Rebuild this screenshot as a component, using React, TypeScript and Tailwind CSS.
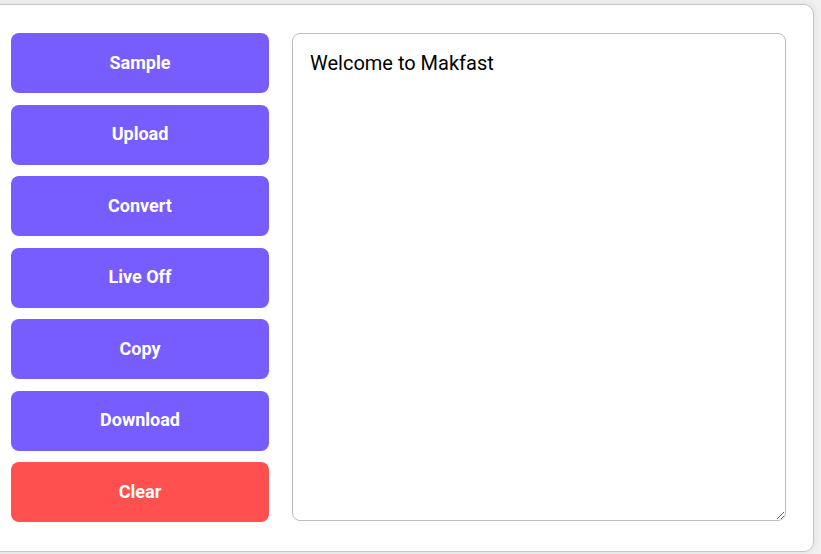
export default function App() {
  const buttons = ['Sample', 'Upload', 'Convert', 'Live Off', 'Copy', 'Download'];

  return (
    <div className="h-[554px] overflow-hidden bg-[#f0f0f0] pt-1 font-['Roboto',sans-serif]">
      <div className="-ml-[10px] flex h-[548px] w-[824px] gap-[23px] rounded-[10px] border border-[#c6c6c6] bg-white pl-5 pt-7 shadow-[0_0_6px_rgba(0,0,0,0.08)]">
        <div className="flex w-[258px] flex-col gap-[11.5px]">
          {buttons.map((label) => (
            <button
              key={label}
              className="h-[60px] rounded-lg bg-[#775dfe] pb-0.5 text-[18px] font-bold text-white"
            >
              {label}
            </button>
          ))}
          <button className="h-[60px] rounded-lg bg-[#ff4f4f] pb-0.5 text-[18px] font-bold text-white">
            Clear
          </button>
        </div>
        <textarea
          defaultValue="Welcome to Makfast"
          className="h-[488px] w-[494px] rounded-lg border border-[#bdbdbd] px-[17px] pt-[14px] pb-4 font-['Roboto',sans-serif] text-[20px] text-black outline-none"
        />
      </div>
    </div>
  );
}
